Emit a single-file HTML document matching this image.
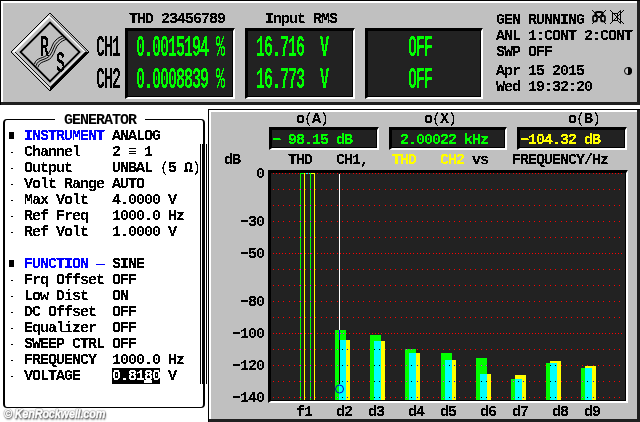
<!DOCTYPE html>
<html><head><meta charset="utf-8"><title>UPL</title>
<style>
html,body{margin:0;padding:0}
body{width:640px;height:422px;overflow:hidden;background:#fff;position:relative;font-family:"Liberation Mono",monospace}
div,span{position:absolute;box-sizing:border-box}
.t{font:bold 15px/16px "Liberation Mono",monospace;letter-spacing:-1.0015px;white-space:pre;color:#000;height:16px}
.t span{position:static}
.b{color:#00f}.n{font-weight:normal}
.g{color:#0f0}.y{color:#ff0}
.big{font:bold 15px/16px "Liberation Mono",monospace;letter-spacing:-1.0015px;white-space:pre;color:#0f0;transform:scaleY(2);transform-origin:0 0;height:16px}
.lab{color:#000}
.box{background:#222;border-style:solid;border-width:3px 2px 2px 3px;border-color:#000 #fff #fff #000;box-shadow:inset -1px -1px 0 #000}
.pan{background:#c0c0c0}
.k{background:#000}
.t{filter:url(#cr)}.big{filter:url(#cr2)}.big.lab{filter:url(#cr3)}
</style></head><body>
<svg width="0" height="0" style="position:absolute"><defs><filter id="cr" x="0" y="0" width="100%" height="100%" color-interpolation-filters="sRGB"><feComponentTransfer><feFuncA type="discrete" tableValues="0 0 0 0 0 0 0 0 0 1 1 1 1 1 1 1 1 1 1 1"/></feComponentTransfer></filter><filter id="cr2" x="0" y="0" width="100%" height="100%" color-interpolation-filters="sRGB"><feComponentTransfer><feFuncA type="discrete" tableValues="0 1"/></feComponentTransfer></filter><filter id="cr3" x="0" y="0" width="100%" height="100%" color-interpolation-filters="sRGB"><feComponentTransfer><feFuncA type="discrete" tableValues="0 0 0 1 1"/></feComponentTransfer></filter></defs></svg>

<div style="left:0px;top:0px;width:640px;height:105px;background:#000"></div>
<div style="left:1px;top:1px;width:639px;height:104px;background:#202020"></div>
<div style="left:1px;top:1px;width:636px;height:101px;background:#fff"></div>
<div style="left:3px;top:3px;width:634px;height:99px;background:#c0c0c0"></div>
<svg style="position:absolute;left:0;top:0" width="100" height="104" viewBox="0 0 100 104">
<polygon points="50,13 89,52 50,91 11,52" fill="#c0c0c0" stroke="#000" stroke-width="1"/>
<polygon points="50,14 12,52 15,52 50,17" fill="#fff"/>
<polygon points="50,18 16,52 50,86" fill="none"/>
<polyline points="50,15.5 86.5,52" fill="none" stroke="#000" stroke-width="0.8"/>
<polyline points="50,17 85,52" fill="none" stroke="#fff" stroke-width="1.2"/>
<polyline points="13.5,52 50,88.5" fill="none" stroke="#fff" stroke-width="1"/>
<polyline points="15,52 50,87" fill="none" stroke="#000" stroke-width="0.9"/>
<polygon points="89,52 50,91 50,87 85,52" fill="#000"/>
<polyline points="83.5,52 50,85.5" fill="none" stroke="#fff" stroke-width="1"/>
<polygon points="50,22.5 79.5,52 50,81.5 20.5,52" fill="none" stroke="#000" stroke-width="1.8"/>
<g fill="none" stroke="#000" stroke-width="1">
<path d="M34.5,64 C36,57 44,59 48,54 C52,49 52,43 56,40 C58,38 60,37 62.5,36"/>
<path d="M36.2,65.7 C37.7,58.7 45.7,60.7 49.7,55.7 C53.7,50.7 53.7,44.7 57.7,41.7 C59.7,39.7 61.7,38.7 64.2,37.7"/>
<path d="M37.9,67.4 C39.4,60.4 47.4,62.4 51.4,57.4 C55.4,52.4 55.4,46.4 59.4,43.4 C61.4,41.4 63.4,40.4 65.9,39.4"/>
</g>
</svg>
<div class="big lab" style="left:40px;top:34px">R</div>
<div class="big lab" style="left:56px;top:50px">S</div>
<div class="big lab" style="left:96px;top:34px">CH1</div>
<div class="big lab" style="left:96px;top:66px">CH2</div>
<div class="box" style="left:125px;top:28px;width:110px;height:71px"></div>
<div class="box" style="left:245px;top:28px;width:110px;height:71px"></div>
<div class="box" style="left:365px;top:28px;width:118px;height:71px"></div>
<div class="t " style="left:129px;top:12px;">THD 23456789</div>
<div class="t " style="left:265px;top:12px;">Input RMS</div>
<div class="big " style="left:136px;top:34px">0.0015194 %</div>
<div class="big " style="left:136px;top:66px">0.0008839 %</div>
<div class="big " style="left:256px;top:34px">16.716  V</div>
<div class="big " style="left:256px;top:66px">16.773  V</div>
<div class="big " style="left:408px;top:34px">OFF</div>
<div class="big " style="left:408px;top:66px">OFF</div>
<div class="t " style="left:496px;top:13px;">GEN RUNNING</div>
<div class="t " style="left:496px;top:29px;">ANL 1:CONT 2:CONT</div>
<div class="t " style="left:496px;top:45px;">SWP OFF</div>
<div class="t " style="left:496px;top:64px;">Apr 15 2015</div>
<div class="t " style="left:496px;top:80px;">Wed 19:32:20</div>
<svg style="position:absolute;left:590px;top:8px" width="36" height="18" viewBox="590 8 36 18" fill="none" stroke="#000" stroke-width="1">
<path d="M592,10 L606,24 M606,10 L592,24"/>
<path d="M595.5,17 L595.5,14 Q595.5,12 597.5,12 L600.5,12 Q602.5,12 602.5,14 L602.5,17" stroke-width="2.2"/>
<rect x="593" y="15.5" width="4" height="6" rx="1.8" stroke-width="1.7"/>
<rect x="601" y="15.5" width="4" height="6" rx="1.8" stroke-width="1.7"/>
<path d="M610,10 L624,24 M624,10 L610,24"/>
<rect x="612.5" y="13.5" width="5" height="7"/>
<path d="M617.5,13.5 L620.5,10.5 L620.5,23.5 L617.5,20.5"/>
</svg>
<svg style="position:absolute;left:623px;top:66px" width="10" height="10" viewBox="623 66 10 10">
<circle cx="628" cy="71" r="3.5" fill="#d0d0d0" stroke="#000" stroke-width="1"/>
<path d="M628,67 A4,4 0 0 1 628,75 Z" fill="#000"/>
</svg>
<div style="left:3px;top:119px;width:202px;height:289px;border:solid #000;border-width:1px 2px;border-radius:4px"></div>
<div class="t" style="left:55px;top:113px;width:90px;background:#fff;padding-left:9px">GENERATOR</div>
<div style="left:200px;top:144px;width:1px;height:240px;background:#000"></div>
<div style="left:202px;top:144px;width:1px;height:240px;background:#000"></div>
<div style="left:206px;top:144px;width:1px;height:240px;background:#000"></div>
<div style="left:112px;top:368px;width:48px;height:16px;background:#000"></div>
<div style="left:9px;top:132px;width:5px;height:7px;background:#000"></div>
<div class="t " style="left:24px;top:129px;"><span class="b">INSTRUMENT</span> ANALOG</div>
<div style="left:11px;top:152px;width:2px;height:1px;background:#000"></div>
<div class="t " style="left:24px;top:145px;">Channel    2 ≡ 1</div>
<div style="left:11px;top:168px;width:2px;height:1px;background:#000"></div>
<div class="t " style="left:24px;top:161px;">Output     UNBAL <span class="n">(</span>5 Ω<span class="n">)</span></div>
<div style="left:11px;top:184px;width:2px;height:1px;background:#000"></div>
<div class="t " style="left:24px;top:177px;">Volt Range AUTO</div>
<div style="left:11px;top:200px;width:2px;height:1px;background:#000"></div>
<div class="t " style="left:24px;top:193px;">Max Volt   4.0000 V</div>
<div style="left:11px;top:216px;width:2px;height:1px;background:#000"></div>
<div class="t " style="left:24px;top:209px;">Ref Freq   1000.0 Hz</div>
<div style="left:11px;top:232px;width:2px;height:1px;background:#000"></div>
<div class="t " style="left:24px;top:225px;">Ref Volt   1.0000 V</div>
<div style="left:9px;top:260px;width:5px;height:7px;background:#000"></div>
<div class="t " style="left:24px;top:257px;"><span class="b">FUNCTION —</span> SINE</div>
<div style="left:11px;top:280px;width:2px;height:1px;background:#000"></div>
<div class="t " style="left:24px;top:273px;">Frq Offset OFF</div>
<div style="left:11px;top:296px;width:2px;height:1px;background:#000"></div>
<div class="t " style="left:24px;top:289px;">Low Dist   ON</div>
<div style="left:11px;top:312px;width:2px;height:1px;background:#000"></div>
<div class="t " style="left:24px;top:305px;">DC Offset  OFF</div>
<div style="left:11px;top:328px;width:2px;height:1px;background:#000"></div>
<div class="t " style="left:24px;top:321px;">Equalizer  OFF</div>
<div style="left:11px;top:344px;width:2px;height:1px;background:#000"></div>
<div class="t " style="left:24px;top:337px;">SWEEP CTRL OFF</div>
<div style="left:11px;top:360px;width:2px;height:1px;background:#000"></div>
<div class="t " style="left:24px;top:353px;">FREQUENCY  1000.0 Hz</div>
<div style="left:11px;top:376px;width:2px;height:1px;background:#000"></div>
<div class="t " style="left:24px;top:369px;">VOLTAGE    <span style="color:#fff">0.8180</span> V</div>
<div style="left:144px;top:380px;width:8px;height:3px;background:#fff;z-index:3"></div>
<div style="left:4px;top:406px;font:italic bold 12.5px/16px 'Liberation Sans',sans-serif;color:#fff;-webkit-text-stroke:0.5px #fff;letter-spacing:-0.2px;white-space:pre;transform:scaleX(0.87);transform-origin:0 0;text-shadow:0 0 1px #555,0 0 1px #555,0 0 2px #666,1px 1px 1px #666,1px 2px 2px #888">© KenRockwell.com</div>
<div style="left:208px;top:109px;width:432px;height:313px;background:#000"></div>
<div style="left:209px;top:110px;width:431px;height:312px;background:#202020"></div>
<div style="left:209px;top:110px;width:428px;height:309px;background:#fff"></div>
<div style="left:211px;top:112px;width:426px;height:307px;background:#c0c0c0"></div>
<div class="t " style="left:296px;top:112px;">o<span class="n">(</span>A<span class="n">)</span></div>
<div class="t " style="left:424px;top:112px;">o<span class="n">(</span>X<span class="n">)</span></div>
<div class="t " style="left:568px;top:112px;">o<span class="n">(</span>B<span class="n">)</span></div>
<div class="box" style="left:269px;top:127px;width:110px;height:23px"></div>
<div class="box" style="left:389px;top:127px;width:118px;height:23px"></div>
<div class="box" style="left:517px;top:127px;width:110px;height:23px"></div>
<div class="t g" style="left:272px;top:133px;">− 98.15 dB</div>
<div class="t g" style="left:400px;top:133px;">2.00022 kHz</div>
<div class="t y" style="left:520px;top:133px;">−104.32 dB</div>
<div class="t " style="left:224px;top:153px;">dB</div>
<div class="t " style="left:288px;top:153px;">THD   CH1,</div>
<div class="t y" style="left:392px;top:153px;">THD   CH2</div>
<div class="t " style="left:472px;top:153px;">vs   FREQUENCY/Hz</div>
<div class="t " style="left:256px;top:167px;">0</div>
<div class="t " style="left:240px;top:215px;">−30</div>
<div class="t " style="left:240px;top:247px;">−50</div>
<div class="t " style="left:240px;top:295px;">−80</div>
<div class="t " style="left:232px;top:327px;">−100</div>
<div class="t " style="left:232px;top:359px;">−120</div>
<div class="t " style="left:232px;top:391px;">−140</div>
<div class="t " style="left:296px;top:405px;">f1</div>
<div class="t " style="left:336px;top:405px;">d2</div>
<div class="t " style="left:368px;top:405px;">d3</div>
<div class="t " style="left:408px;top:405px;">d4</div>
<div class="t " style="left:440px;top:405px;">d5</div>
<div class="t " style="left:480px;top:405px;">d6</div>
<div class="t " style="left:512px;top:405px;">d7</div>
<div class="t " style="left:552px;top:405px;">d8</div>
<div class="t " style="left:584px;top:405px;">d9</div>
<div class="box" style="left:268px;top:170px;width:360px;height:233px"></div>
<svg style="position:absolute;left:271px;top:172px" width="355" height="229" viewBox="271 172 355 229" shape-rendering="crispEdges">
<defs><pattern id="ps" x="273" y="0" width="16" height="1" patternUnits="userSpaceOnUse"><rect x="0" y="0" width="1" height="1" fill="#f00"/><rect x="5" y="0" width="1" height="1" fill="#f00"/><rect x="10" y="0" width="1" height="1" fill="#f00"/></pattern>
<pattern id="pd" x="273" y="0" width="16" height="1" patternUnits="userSpaceOnUse"><rect x="0" y="0" width="1" height="1" fill="#f00"/><rect x="3" y="0" width="1" height="1" fill="#f00"/><rect x="6" y="0" width="1" height="1" fill="#f00"/><rect x="9" y="0" width="1" height="1" fill="#f00"/><rect x="12" y="0" width="1" height="1" fill="#f00"/></pattern></defs>
<rect x="273" y="173" width="349" height="1" fill="url(#pd)"/>
<rect x="273" y="189" width="347" height="1" fill="url(#ps)"/>
<rect x="273" y="205" width="347" height="1" fill="url(#ps)"/>
<rect x="273" y="221" width="347" height="1" fill="url(#ps)"/>
<rect x="273" y="237" width="347" height="1" fill="url(#ps)"/>
<rect x="273" y="253" width="349" height="1" fill="url(#pd)"/>
<rect x="273" y="269" width="347" height="1" fill="url(#ps)"/>
<rect x="273" y="285" width="347" height="1" fill="url(#ps)"/>
<rect x="273" y="301" width="347" height="1" fill="url(#ps)"/>
<rect x="273" y="317" width="347" height="1" fill="url(#ps)"/>
<rect x="273" y="333" width="349" height="1" fill="url(#pd)"/>
<rect x="273" y="349" width="347" height="1" fill="url(#ps)"/>
<rect x="273" y="365" width="347" height="1" fill="url(#ps)"/>
<rect x="273" y="381" width="347" height="1" fill="url(#ps)"/>
<rect x="273" y="397" width="347" height="1" fill="url(#ps)"/>
<rect x="300" y="173" width="1" height="227" fill="#00ff00"/>
<rect x="304" y="173" width="1" height="227" fill="#ffff00"/>
<rect x="310" y="173" width="1" height="227" fill="#00ff00"/>
<rect x="314" y="173" width="1" height="227" fill="#ffff00"/>
<rect x="300" y="173" width="4" height="1" fill="#00ff00"/>
<rect x="306" y="173" width="2" height="1" fill="#00ffff"/><rect x="309" y="173" width="1" height="1" fill="#00ffff"/>
<rect x="311" y="173" width="4" height="1" fill="#ffff00"/>
<rect x="335" y="330" width="11" height="70" fill="#00ff00"/>
<rect x="339" y="340" width="11" height="60" fill="#ffff00"/>
<rect x="339" y="340" width="7" height="60" fill="#00ffff"/>
<rect x="370" y="335" width="11" height="65" fill="#00ff00"/>
<rect x="374" y="341" width="11" height="59" fill="#ffff00"/>
<rect x="374" y="341" width="7" height="59" fill="#00ffff"/>
<rect x="405" y="349" width="11" height="51" fill="#00ff00"/>
<rect x="409" y="353" width="11" height="47" fill="#ffff00"/>
<rect x="409" y="353" width="7" height="47" fill="#00ffff"/>
<rect x="441" y="353" width="11" height="47" fill="#00ff00"/>
<rect x="445" y="360" width="11" height="40" fill="#ffff00"/>
<rect x="445" y="360" width="7" height="40" fill="#00ffff"/>
<rect x="476" y="358" width="11" height="42" fill="#00ff00"/>
<rect x="480" y="374" width="11" height="26" fill="#ffff00"/>
<rect x="480" y="374" width="7" height="26" fill="#00ffff"/>
<rect x="511" y="379" width="11" height="21" fill="#00ff00"/>
<rect x="515" y="375" width="11" height="25" fill="#ffff00"/>
<rect x="515" y="379" width="7" height="21" fill="#00ffff"/>
<rect x="546" y="363" width="11" height="37" fill="#00ff00"/>
<rect x="550" y="361" width="11" height="39" fill="#ffff00"/>
<rect x="550" y="363" width="7" height="37" fill="#00ffff"/>
<rect x="581" y="368" width="11" height="32" fill="#00ff00"/>
<rect x="585" y="366" width="11" height="34" fill="#ffff00"/>
<rect x="585" y="368" width="7" height="32" fill="#00ffff"/>
<rect x="337" y="333" width="1" height="1" fill="#f0f"/>
<rect x="340" y="333" width="1" height="1" fill="#f0f"/>
<rect x="343" y="333" width="1" height="1" fill="#f0f"/>
<rect x="337" y="349" width="1" height="1" fill="#f0f"/>
<rect x="342" y="349" width="1" height="1" fill="#000"/>
<rect x="347" y="349" width="1" height="1" fill="#00f"/>
<rect x="337" y="365" width="1" height="1" fill="#f0f"/>
<rect x="342" y="365" width="1" height="1" fill="#000"/>
<rect x="347" y="365" width="1" height="1" fill="#00f"/>
<rect x="337" y="381" width="1" height="1" fill="#f0f"/>
<rect x="342" y="381" width="1" height="1" fill="#000"/>
<rect x="347" y="381" width="1" height="1" fill="#00f"/>
<rect x="337" y="397" width="1" height="1" fill="#f0f"/>
<rect x="342" y="397" width="1" height="1" fill="#000"/>
<rect x="347" y="397" width="1" height="1" fill="#00f"/>
<rect x="374" y="349" width="1" height="1" fill="#000"/>
<rect x="379" y="349" width="1" height="1" fill="#000"/>
<rect x="374" y="365" width="1" height="1" fill="#000"/>
<rect x="379" y="365" width="1" height="1" fill="#000"/>
<rect x="374" y="381" width="1" height="1" fill="#000"/>
<rect x="379" y="381" width="1" height="1" fill="#000"/>
<rect x="374" y="397" width="1" height="1" fill="#000"/>
<rect x="379" y="397" width="1" height="1" fill="#000"/>
<rect x="406" y="349" width="1" height="1" fill="#f0f"/>
<rect x="411" y="349" width="1" height="1" fill="#f0f"/>
<rect x="406" y="365" width="1" height="1" fill="#f0f"/>
<rect x="411" y="365" width="1" height="1" fill="#000"/>
<rect x="417" y="365" width="1" height="1" fill="#00f"/>
<rect x="406" y="381" width="1" height="1" fill="#f0f"/>
<rect x="411" y="381" width="1" height="1" fill="#000"/>
<rect x="417" y="381" width="1" height="1" fill="#00f"/>
<rect x="406" y="397" width="1" height="1" fill="#f0f"/>
<rect x="411" y="397" width="1" height="1" fill="#000"/>
<rect x="417" y="397" width="1" height="1" fill="#00f"/>
<rect x="443" y="365" width="1" height="1" fill="#f0f"/>
<rect x="449" y="365" width="1" height="1" fill="#000"/>
<rect x="454" y="365" width="1" height="1" fill="#00f"/>
<rect x="443" y="381" width="1" height="1" fill="#f0f"/>
<rect x="449" y="381" width="1" height="1" fill="#000"/>
<rect x="454" y="381" width="1" height="1" fill="#00f"/>
<rect x="443" y="397" width="1" height="1" fill="#f0f"/>
<rect x="449" y="397" width="1" height="1" fill="#000"/>
<rect x="454" y="397" width="1" height="1" fill="#00f"/>
<rect x="481" y="365" width="1" height="1" fill="#f0f"/>
<rect x="486" y="365" width="1" height="1" fill="#f0f"/>
<rect x="481" y="381" width="1" height="1" fill="#000"/>
<rect x="486" y="381" width="1" height="1" fill="#000"/>
<rect x="481" y="397" width="1" height="1" fill="#000"/>
<rect x="486" y="397" width="1" height="1" fill="#000"/>
<rect x="513" y="381" width="1" height="1" fill="#f0f"/>
<rect x="518" y="381" width="1" height="1" fill="#000"/>
<rect x="523" y="381" width="1" height="1" fill="#00f"/>
<rect x="513" y="397" width="1" height="1" fill="#f0f"/>
<rect x="518" y="397" width="1" height="1" fill="#000"/>
<rect x="523" y="397" width="1" height="1" fill="#00f"/>
<rect x="550" y="365" width="1" height="1" fill="#000"/>
<rect x="555" y="365" width="1" height="1" fill="#000"/>
<rect x="550" y="381" width="1" height="1" fill="#000"/>
<rect x="555" y="381" width="1" height="1" fill="#000"/>
<rect x="550" y="397" width="1" height="1" fill="#000"/>
<rect x="555" y="397" width="1" height="1" fill="#000"/>
<rect x="582" y="381" width="1" height="1" fill="#f0f"/>
<rect x="587" y="381" width="1" height="1" fill="#000"/>
<rect x="593" y="381" width="1" height="1" fill="#00f"/>
<rect x="582" y="397" width="1" height="1" fill="#f0f"/>
<rect x="587" y="397" width="1" height="1" fill="#000"/>
<rect x="593" y="397" width="1" height="1" fill="#00f"/>
<rect x="300" y="189" width="1" height="1" fill="#f0f"/>
<rect x="310" y="189" width="1" height="1" fill="#f0f"/>
<rect x="300" y="205" width="1" height="1" fill="#f0f"/>
<rect x="310" y="205" width="1" height="1" fill="#f0f"/>
<rect x="300" y="221" width="1" height="1" fill="#f0f"/>
<rect x="310" y="221" width="1" height="1" fill="#f0f"/>
<rect x="300" y="237" width="1" height="1" fill="#f0f"/>
<rect x="310" y="237" width="1" height="1" fill="#f0f"/>
<rect x="300" y="253" width="1" height="1" fill="#f0f"/>
<rect x="310" y="253" width="1" height="1" fill="#f0f"/>
<rect x="300" y="269" width="1" height="1" fill="#f0f"/>
<rect x="310" y="269" width="1" height="1" fill="#f0f"/>
<rect x="300" y="285" width="1" height="1" fill="#f0f"/>
<rect x="310" y="285" width="1" height="1" fill="#f0f"/>
<rect x="300" y="301" width="1" height="1" fill="#f0f"/>
<rect x="310" y="301" width="1" height="1" fill="#f0f"/>
<rect x="300" y="317" width="1" height="1" fill="#f0f"/>
<rect x="310" y="317" width="1" height="1" fill="#f0f"/>
<rect x="300" y="333" width="1" height="1" fill="#f0f"/>
<rect x="310" y="333" width="1" height="1" fill="#f0f"/>
<rect x="300" y="349" width="1" height="1" fill="#f0f"/>
<rect x="310" y="349" width="1" height="1" fill="#f0f"/>
<rect x="300" y="365" width="1" height="1" fill="#f0f"/>
<rect x="310" y="365" width="1" height="1" fill="#f0f"/>
<rect x="300" y="381" width="1" height="1" fill="#f0f"/>
<rect x="310" y="381" width="1" height="1" fill="#f0f"/>
<rect x="300" y="397" width="1" height="1" fill="#f0f"/>
<rect x="310" y="397" width="1" height="1" fill="#f0f"/>
<rect x="339" y="174" width="1" height="156" fill="#fff"/>
<rect x="339" y="330" width="1" height="10" fill="#00f"/>
<rect x="339" y="340" width="1" height="44" fill="#000"/>
<circle cx="339.5" cy="389" r="4" fill="none" stroke="#00c" stroke-width="1" shape-rendering="auto"/>
</svg>
</body></html>
